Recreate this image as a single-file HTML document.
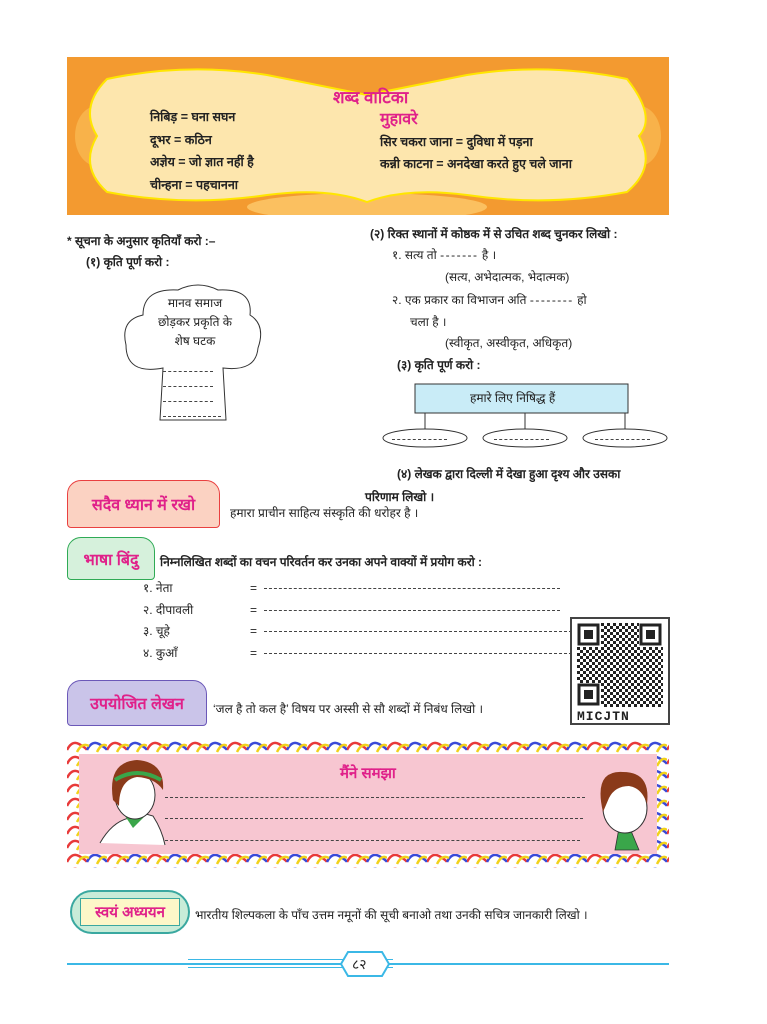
<!DOCTYPE html>
<html><head><meta charset="utf-8"><style>
*{margin:0;padding:0;box-sizing:border-box}
body{width:767px;height:1024px;background:#fff;position:relative;overflow:hidden;font-family:"Liberation Sans","Noto Sans CJK SC",sans-serif;color:#222;font-size:12px}
.a{position:absolute;white-space:nowrap}
.b{font-weight:bold}
.pk{color:#e0218a;font-weight:bold}
.lbl{position:absolute;border-radius:14px 14px 4px 4px;display:flex;align-items:center;justify-content:center;font-size:16px;color:#e0218a;font-weight:bold}
.d{position:absolute;height:0;border-top:1.3px dashed #444}
</style></head><body>

<!-- top banner -->
<div class="a" style="left:67px;top:57px;width:602px;height:158px;background:#f39a30"></div>
<svg class="a" style="left:67px;top:57px" width="602" height="158">
<ellipse cx="30" cy="79" rx="22" ry="30" fill="#f8b24a"/>
<ellipse cx="572" cy="79" rx="22" ry="30" fill="#f8b24a"/>
<ellipse cx="300" cy="150" rx="120" ry="14" fill="#fbc060"/>
<path d="M40,22 Q120,5 200,18 Q260,30 300,38 Q340,30 400,18 Q480,5 560,22 Q590,60 572,79 Q590,110 560,135 Q480,150 400,138 Q340,130 300,145 Q260,130 200,138 Q120,150 40,135 Q12,110 30,79 Q12,50 40,22Z" fill="#fde6ad" stroke="#ffe600" stroke-width="2"/>
</svg>
<div class="a pk" style="left:333px;top:85px;font-size:17px">शब्द वाटिका</div>
<div class="a b" style="left:150px;top:106px;font-size:12.5px;line-height:22.5px">निबिड़ = घना सघन<br>दूभर = कठिन<br>अज्ञेय = जो ज्ञात नहीं है<br>चीन्हना = पहचानना</div>
<div class="a pk" style="left:380px;top:107px;font-size:16px">मुहावरे</div>
<div class="a b" style="left:380px;top:131px;font-size:12.5px;line-height:22px">सिर चकरा जाना = दुविधा में पड़ना<br>कन्नी काटना = अनदेखा करते हुए चले जाना</div>

<!-- left column -->
<div class="a b" style="left:67px;top:232px">* सूचना के अनुसार कृतियाँ करो :–</div>
<div class="a b" style="left:86px;top:253px">(१) कृति पूर्ण करो :</div>
<svg class="a" style="left:118px;top:280px" width="150" height="145">
<path d="M45,88 Q8,95 8,65 Q2,40 25,35 Q25,8 60,10 Q80,0 100,10 Q135,8 132,35 Q148,45 140,68 Q138,92 105,88 L108,140 L42,140 Z" fill="#fff" stroke="#333" stroke-width="1"/>
</svg>
<div class="a" style="left:145px;top:294px;width:100px;text-align:center;white-space:normal;line-height:19px">मानव समाज<br>छोड़कर प्रकृति के<br>शेष घटक</div>
<div class="d" style="left:163px;top:371px;width:50px"></div>
<div class="d" style="left:163px;top:386px;width:50px"></div>
<div class="d" style="left:163px;top:401px;width:50px"></div>
<div class="d" style="left:163px;top:416px;width:58px"></div>

<!-- right column -->
<div class="a b" style="left:370px;top:225px">(२) रिक्त स्थानों में कोष्ठक में से उचित शब्द चुनकर लिखो :</div>
<div class="a" style="left:392px;top:246px">१. सत्य तो <span style="letter-spacing:1.5px">-------</span> है ।</div>
<div class="a" style="left:445px;top:268px">(सत्य, अभेदात्मक, भेदात्मक)</div>
<div class="a" style="left:392px;top:291px">२. एक प्रकार का विभाजन अति <span style="letter-spacing:1.5px">--------</span> हो</div>
<div class="a" style="left:410px;top:313px">चला है ।</div>
<div class="a" style="left:445px;top:334px">(स्वीकृत, अस्वीकृत, अधिकृत)</div>
<div class="a b" style="left:397px;top:356px">(३) कृति पूर्ण करो :</div>
<svg class="a" style="left:380px;top:380px" width="290" height="70">
<rect x="35" y="4" width="213" height="29" fill="#c9ecf7" stroke="#333"/>
<path d="M45,33V50M145,33V50M245,33V50" stroke="#333"/>
<ellipse cx="45" cy="58" rx="42" ry="9" fill="#fff" stroke="#333"/>
<ellipse cx="145" cy="58" rx="42" ry="9" fill="#fff" stroke="#333"/>
<ellipse cx="245" cy="58" rx="42" ry="9" fill="#fff" stroke="#333"/>
</svg>
<div class="a" style="left:470px;top:389px">हमारे लिए निषिद्ध हैं</div>
<div class="d" style="left:392px;top:439px;width:55px"></div>
<div class="d" style="left:494px;top:439px;width:55px"></div>
<div class="d" style="left:595px;top:439px;width:55px"></div>
<div class="a b" style="left:397px;top:465px">(४) लेखक द्वारा दिल्ली में देखा हुआ दृश्य और उसका</div>
<div class="a b" style="left:365px;top:488px">परिणाम लिखो ।</div>

<!-- labels -->
<div class="lbl" style="left:67px;top:480px;width:153px;height:48px;background:#fbd2c2;border:1.5px solid #e94040">सदैव ध्यान में रखो</div>
<div class="a" style="left:230px;top:504px">हमारा प्राचीन साहित्य संस्कृति की धरोहर है ।</div>
<div class="lbl" style="left:67px;top:537px;width:88px;height:43px;background:#d6f1dc;border:1.5px solid #2faa55">भाषा बिंदु</div>
<div class="a b" style="left:160px;top:553px">निम्नलिखित शब्दों का वचन परिवर्तन कर उनका अपने वाक्यों में प्रयोग करो :</div>
<div class="a" style="left:143px;top:578px;line-height:21.5px">१. नेता<br>२. दीपावली<br>३. चूहे<br>४. कुआँ</div>
<div class="a" style="left:250px;top:578px;line-height:21.5px">=<br>=<br>=<br>=</div>
<div class="d" style="left:264px;top:588px;width:296px"></div>
<div class="d" style="left:264px;top:610px;width:296px"></div>
<div class="d" style="left:264px;top:631px;width:308px"></div>
<div class="d" style="left:264px;top:653px;width:308px"></div>

<!-- QR -->
<div class="a" style="left:570px;top:617px;width:100px;height:108px;border:2px solid #444;background:#fff"></div>
<svg class="a" style="left:577px;top:623px" width="86" height="84">
<defs><pattern id="q" width="6" height="6" patternUnits="userSpaceOnUse"><rect width="3" height="3" fill="#222"/><rect x="3" y="3" width="3" height="3" fill="#222"/></pattern></defs>
<rect width="86" height="84" fill="url(#q)"/>
<g fill="#fff"><rect width="24" height="24"/><rect x="62" width="24" height="24"/><rect y="60" width="24" height="24"/></g>
<g fill="none" stroke="#222" stroke-width="3"><rect x="2" y="2" width="19" height="19"/><rect x="64" y="2" width="19" height="19"/><rect x="2" y="62" width="19" height="19"/></g>
<g fill="#222"><rect x="7" y="7" width="9" height="9"/><rect x="69" y="7" width="9" height="9"/><rect x="7" y="67" width="9" height="9"/></g>
</svg>
<div class="a b" style="left:577px;top:709px;font-family:'Liberation Mono',monospace;font-size:13px;letter-spacing:1px">MICJTN</div>

<div class="lbl" style="left:67px;top:680px;width:140px;height:46px;background:#cac4e9;border:1.5px solid #6b58b8">उपयोजित लेखन</div>
<div class="a" style="left:213px;top:700px">‘जल है तो कल है’ विषय पर अस्सी से सौ शब्दों में निबंध लिखो ।</div>

<!-- pink box -->
<svg class="a" style="left:67px;top:740px" width="602" height="128">
<defs><pattern id="rb" width="40" height="14" patternUnits="userSpaceOnUse">
<path d="M0,10 Q5,0 12,4 T20,10" stroke="#e83a3a" stroke-width="2.5" fill="none"/>
<path d="M20,10 Q25,0 32,4 T40,10" stroke="#3a4ad8" stroke-width="2.5" fill="none"/>
<path d="M10,12 Q15,2 22,6" stroke="#f2d21a" stroke-width="2.5" fill="none"/>
<path d="M30,12 Q35,2 40,6" stroke="#f2d21a" stroke-width="2.5" fill="none"/>
</pattern></defs>
<rect width="602" height="128" fill="url(#rb)"/>
<rect x="12" y="14" width="578" height="100" fill="#f7c6d1"/>
<!-- girl -->
<path d="M33,103 Q45,82 62,78 L72,72 L86,76 Q95,90 98,105" fill="#fff" stroke="#333"/>
<path d="M58,76 L66,88 L78,76Z" fill="#3aa64a"/>
<ellipse cx="68" cy="55" rx="20" ry="24" fill="#fff" stroke="#333"/>
<path d="M46,60 Q40,22 70,20 Q98,22 96,50 Q88,38 70,37 Q52,40 52,66Z" fill="#8a3a1a"/>
<path d="M48,40 Q70,26 94,40" stroke="#3aa64a" stroke-width="4" fill="none"/>
<!-- boy -->
<path d="M548,110 L552,88 L562,86 L572,110Z" fill="#3aa64a" stroke="#333" stroke-width=".8"/>
<ellipse cx="558" cy="68" rx="22" ry="25" fill="#fff" stroke="#333"/>
<path d="M536,72 Q526,30 556,32 Q584,32 580,64 Q575,48 562,46 Q548,46 542,58Z" fill="#8a3a1a"/>
</svg>
<div class="a pk" style="left:340px;top:763px;font-size:15px">मैंने समझा</div>
<div class="d" style="left:165px;top:797px;width:420px"></div>
<div class="d" style="left:165px;top:818px;width:418px"></div>
<div class="d" style="left:165px;top:840px;width:415px"></div>

<!-- swayam -->
<div class="a" style="left:70px;top:890px;width:120px;height:44px;border-radius:22px;background:#c8ecd8;border:2px solid #3aa8a0"></div>
<div class="a" style="left:80px;top:898px;width:100px;height:28px;background:#fdf7c8;border:1.5px solid #3aa8a0;display:flex;align-items:center;justify-content:center;font-size:15px;color:#e0218a;font-weight:bold">स्वयं अध्ययन</div>
<div class="a" style="left:195px;top:906px">भारतीय शिल्पकला के पाँच उत्तम नमूनों की सूची बनाओ तथा उनकी सचित्र जानकारी लिखो ।</div>

<!-- footer -->
<div class="a" style="left:67px;top:963px;width:602px;height:2px;background:#3bb8e6"></div>
<div class="a" style="left:188px;top:959px;width:205px;height:1px;background:#3bb8e6"></div>
<div class="a" style="left:188px;top:967px;width:205px;height:1px;background:#3bb8e6"></div>
<svg class="a" style="left:340px;top:951px" width="50" height="26"><path d="M8,1H42L49,13L42,25H8L1,13Z" fill="#fff" stroke="#3bb8e6" stroke-width="2"/></svg>
<div class="a" style="left:352px;top:955px;font-size:14px">८२</div>
</body></html>
